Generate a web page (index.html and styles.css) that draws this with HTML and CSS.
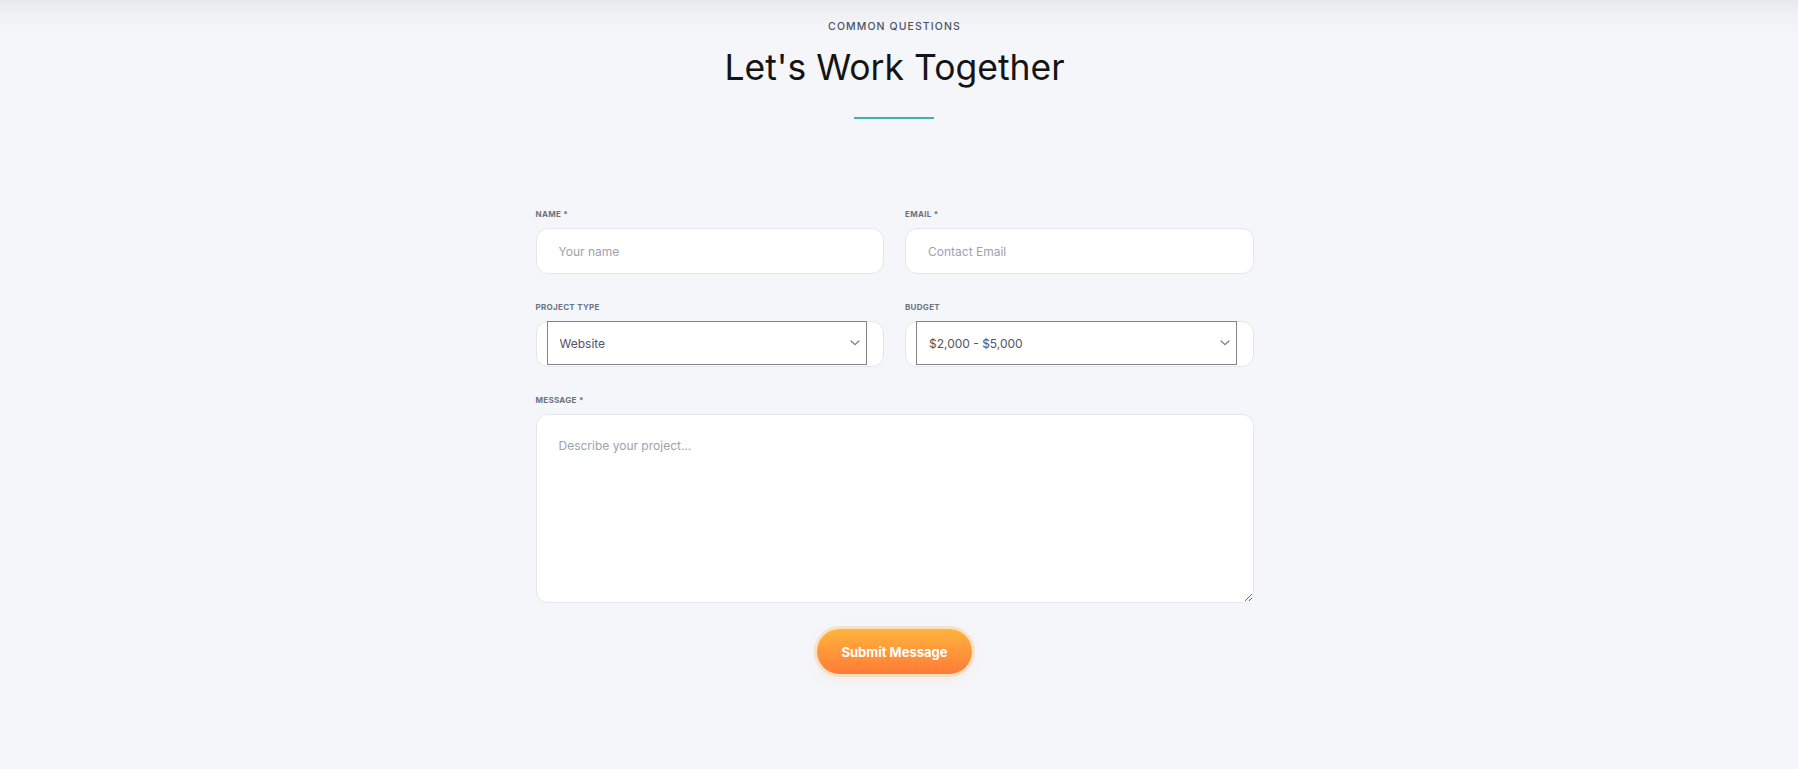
FILE: index.html
```html
<!DOCTYPE html>
<html lang="en">
<head>
<meta charset="utf-8">
<title>Let's Work Together</title>
<link rel="stylesheet" href="styles.css">
</head>
<body>
<div class="page">
  <section class="contact">
    <header class="contact-head">
      <p class="eyebrow">COMMON QUESTIONS</p>
      <h1 class="title">Let's Work Together</h1>
      <div class="rule"></div>
    </header>
    <form class="form">
      <div class="grid">
        <div class="field">
          <label class="label">NAME *</label>
          <input class="input" type="text" placeholder="Your name">
        </div>
        <div class="field">
          <label class="label">EMAIL *</label>
          <input class="input" type="email" placeholder="Contact Email">
        </div>
        <div class="field">
          <label class="label">PROJECT TYPE</label>
          <div class="select-wrap">
            <select class="select">
              <option>Website</option>
              <option>Web App</option>
              <option>Branding</option>
            </select>
          </div>
        </div>
        <div class="field">
          <label class="label">BUDGET</label>
          <div class="select-wrap">
            <select class="select">
              <option>$2,000 - $5,000</option>
              <option>$5,000 - $10,000</option>
            </select>
          </div>
        </div>
        <div class="field full">
          <label class="label">MESSAGE *</label>
          <textarea class="textarea" placeholder="Describe your project..."></textarea>
        </div>
      </div>
      <div class="actions">
        <button class="submit" type="button">Submit Message</button>
      </div>
    </form>
  </section>
</div>
</body>
</html>
```
FILE: styles.css
```css
* { box-sizing: border-box; }
html, body { margin: 0; padding: 0; }
body {
  background-color: #f5f6fa;
  background-image: linear-gradient(to bottom, #e7e8ec 0px, #f0f1f5 14px, #f5f6fa 34px);
  background-repeat: no-repeat;
  background-size: 100% 40px;
  font-family: Inter, "Noto Sans", sans-serif;
  color: #111;
  min-height: 769px;
}
.page { padding: 0 9px 0 0; }
.contact { display: flex; flex-direction: column; align-items: center; padding-top: 19px; }
.contact-head { display: flex; flex-direction: column; align-items: center; }
.eyebrow {
  margin: 0;
  font-size: 10.5px;
  line-height: 16px;
  font-weight: 500;
  letter-spacing: 1.1px;
  color: #4b5563;
}
.title {
  margin: 11px 0 0;
  font-size: 35.5px;
  line-height: 44px;
  font-weight: 400;
  color: #141414;
  letter-spacing: 0;
}
.rule {
  width: 80px;
  height: 2px;
  background: #3bb4b1;
  margin-top: 27px;
}
.form { width: 718px; margin-top: 89px; }
.grid {
  display: grid;
  grid-template-columns: 1fr 1fr;
  column-gap: 21px;
  row-gap: 27px;
}
.field { display: flex; flex-direction: column; }
.field.full { grid-column: 1 / -1; }
.label {
  font-size: 8px;
  line-height: 12px;
  font-weight: 700;
  letter-spacing: 0.3px;
  color: #6b7280;
  margin-bottom: 8px;
}
.input, .textarea {
  width: 100%;
  background: #fff;
  border: 1px solid #e3e6ec;
  border-radius: 12px;
  font-family: Inter, "Noto Sans", sans-serif;
  font-size: 12px;
  color: #374151;
  outline: none;
}
.input { height: 46px; padding: 0 22px; }
.input::placeholder, .textarea::placeholder { color: #9ca3af; }
.select-wrap {
  height: 46px;
  background: #fff;
  border: 1px solid #e3e6ec;
  border-radius: 12px;
  display: flex;
  padding: 0 16px 0 10px;
}
.select {
  flex: 1;
  height: 44px;
  margin-top: -1px;
  border: 1px solid #858585;
  border-radius: 0;
  -webkit-appearance: none;
  appearance: none;
  background-color: #fff;
  background-image: url("data:image/svg+xml,%3Csvg xmlns='http://www.w3.org/2000/svg' width='10' height='6' viewBox='0 0 10 6'%3E%3Cpath d='M1 1l4 3.6L9 1' fill='none' stroke='%23777777' stroke-width='1.2' stroke-linecap='round' stroke-linejoin='round'/%3E%3C/svg%3E");
  background-repeat: no-repeat;
  background-position: right 6px center;
  background-size: 10px 6px;
  font-family: Inter, "Noto Sans", sans-serif;
  font-size: 12px;
  color: #505660;
  padding: 0 0 0 12px;
  outline: none;
}
.textarea { height: 189px; padding: 23px 22px; resize: vertical; display: block; }
.actions { display: flex; justify-content: center; margin-top: 26px; }
.submit {
  height: 45px;
  padding: 0 25px;
  border: none;
  border-radius: 999px;
  background: linear-gradient(to bottom, #ffb43c, #ff7b37);
  color: #fff;
  font-family: Inter, "Noto Sans", sans-serif;
  font-size: 13px;
  font-weight: 700;
  box-shadow: 0 0 0 3px rgba(246, 214, 160, 0.55), 0 4px 12px rgba(255, 140, 60, 0.15);
  cursor: pointer;
}
```
